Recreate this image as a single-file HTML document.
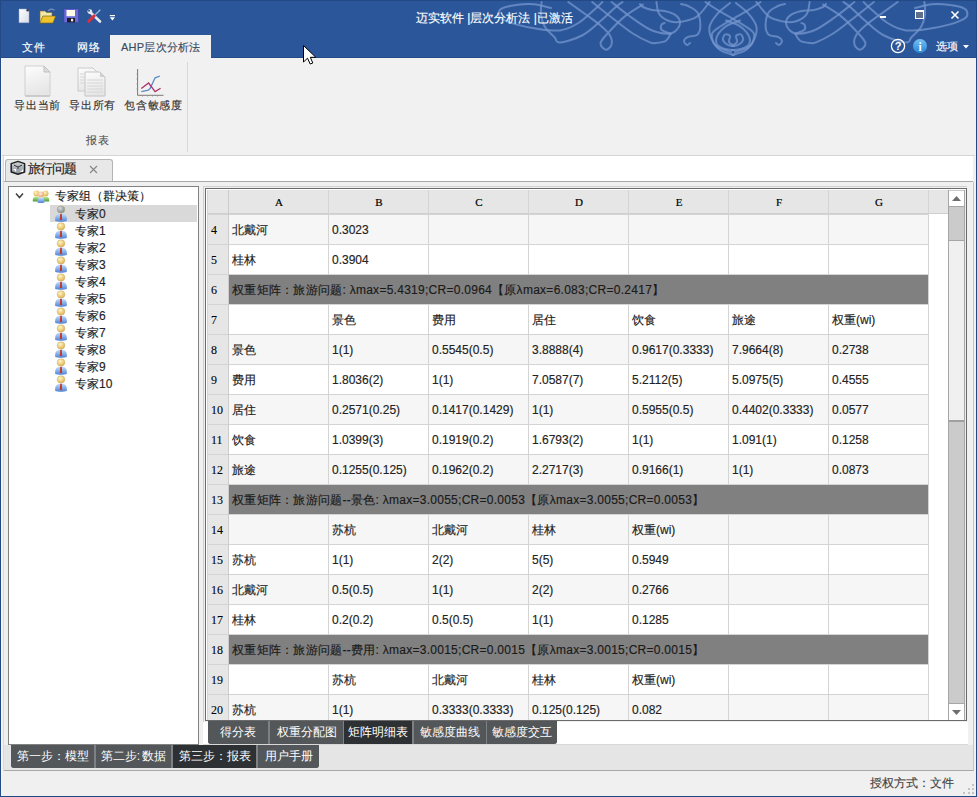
<!DOCTYPE html>
<html><head><meta charset="utf-8">
<style>
*{box-sizing:border-box}
html,body{margin:0;padding:0;width:977px;height:797px;overflow:hidden;background:#f0f0f0;font-family:"Liberation Sans",sans-serif;font-size:12px;color:#262626}
.a{-webkit-text-stroke:0.15px currentColor}
.a{position:absolute}
#title{left:0;top:0;width:977px;height:58px;background:#2b579a}
#ribbon{left:0;top:58px;width:977px;height:98px;background:#f1f1f1;border-bottom:1px solid #d5d5d5}
.tab{color:#fff;font-size:11px;top:41px;line-height:13px;letter-spacing:0.5px}
.rbtn{font-size:11px;color:#333;line-height:13px;white-space:nowrap;letter-spacing:0.8px}
#doctabs{left:3px;top:156px;width:970px;height:26px;background:#fff;border-bottom:1px solid #a8a8a8}
#body{left:3px;top:182px;width:971px;height:589px;background:#f0f0f0;border-bottom:1px solid #a8a8a8;border-right:1px solid #c4c4c4}
#tree{left:8px;top:186px;width:191px;height:559px;background:#fff;border:1px solid #828282}
.ti{left:0;height:17px;line-height:17px;white-space:nowrap;font-size:12px;color:#1e1e1e}
#grid{left:203px;top:186px;width:764px;height:536px;border:1px solid #d9d9d9;background:#fff}
#gframe{left:205px;top:188px;width:762px;height:533px;border:1px solid #6e6e6e;border-right-width:1px}
.hd{background:#e6e6e6}
.cell{position:absolute;height:30px;line-height:30px;padding-left:3px;white-space:nowrap;overflow:visible}
.stab{position:absolute;height:23px;line-height:23px;text-align:center;color:#fff;background:#53575a;font-size:12px;white-space:nowrap}
.stab.act{background:#2e3134}
.ct{font-size:12px;line-height:14px;white-space:nowrap;color:#222}
.hl{font-family:"Liberation Serif",serif;font-size:11px;font-weight:normal;text-align:center;line-height:12px;color:#000;-webkit-text-stroke:0.2px #000}
.rn{font-family:"Liberation Serif",serif;font-size:12px;font-weight:normal;line-height:14px;color:#000;-webkit-text-stroke:0.1px #000}
.mg{letter-spacing:0.27px;color:#1a1a1a}
</style></head><body>
<!-- window frame -->
<div class="a" id="title">
 <svg class="a" style="left:0;top:0" width="977" height="58" viewBox="0 0 977 58">
  <g fill="none" stroke="#7596cd" stroke-opacity="0.75" stroke-width="2" stroke-linecap="round">
   <path d="M551.0 8.0 C548.2 7.4 539.8 4.8 534.0 4.3 C528.2 3.8 521.4 4.3 516.0 5.0 C510.6 5.7 504.4 7.0 501.5 8.6 C498.6 10.2 498.6 12.6 498.6 14.3 C498.6 16.0 498.6 16.9 501.5 18.6 C504.4 20.3 510.1 22.7 516.0 24.4 C521.9 26.1 529.7 27.7 537.0 28.7 C544.3 29.7 553.1 31.3 560.0 30.4 C566.9 29.4 572.3 26.8 578.4 23.0 C584.5 19.2 592.8 10.9 596.8 7.4 C600.8 3.9 601.5 2.9 602.4 2.0"/>
   <path d="M541.6 2.0 C541.5 4.2 540.4 10.8 541.0 15.0 C541.6 19.2 542.8 23.3 545.0 27.0 C547.2 30.7 552.0 34.6 554.5 37.2 C557.0 39.8 555.2 42.8 560.0 42.4 C564.8 42.0 576.1 38.7 583.0 35.0 C589.9 31.3 596.0 24.9 601.4 20.3 C606.8 15.7 611.7 10.5 615.2 7.4 C618.7 4.3 621.4 2.9 622.6 2.0"/>
   <path d="M642.9 4.6 C639.8 6.6 630.3 11.9 624.5 16.6 C618.7 21.4 611.9 28.7 607.9 33.1 C603.9 37.5 600.8 40.5 600.5 43.3 C600.2 46.1 604.1 49.6 606.0 49.7 C607.9 49.9 611.0 46.7 611.6 44.2 C612.2 41.8 611.6 38.2 609.7 35.0 C607.8 31.8 603.7 28.2 600.0 25.0 C596.3 21.8 592.9 19.5 587.6 15.7 C582.3 11.9 571.5 4.3 568.3 2.0"/>
   <path d="M592.2 2.0 C596.0 5.1 608.3 15.0 615.2 20.3 C622.1 25.6 627.9 30.3 633.7 34.0 C639.5 37.7 646.4 40.9 650.0 42.4 C653.6 43.9 652.8 43.2 655.4 43.0 C658.0 42.8 663.0 42.5 665.6 41.0 C668.2 39.5 669.9 35.0 670.7 33.8"/>
   <path d="M611.6 2.0 C614.5 4.3 622.6 11.1 629.0 15.7 C635.4 20.3 643.6 26.5 650.0 29.5 C656.4 32.5 663.3 33.6 667.6 33.8 C671.9 34.0 673.7 32.6 675.8 30.7 C677.9 28.8 680.0 25.1 680.0 22.5 C680.0 19.9 678.2 17.3 675.8 15.4 C673.4 13.5 669.6 12.2 665.6 11.3 C661.6 10.4 655.8 10.7 652.0 10.0 C648.2 9.3 645.0 8.0 643.0 7.0 C641.0 6.0 640.5 4.5 640.0 4.0"/>
   <path d="M670.7 33.8 C669.2 33.1 663.0 31.2 661.5 29.7 C660.0 28.2 661.0 25.7 661.5 24.6 C662.0 23.5 664.1 23.3 664.6 23.0"/>
   <path d="M656.4 2.0 C656.9 4.1 657.0 11.1 659.4 14.3 C661.8 17.6 666.8 20.3 670.7 21.5 C674.6 22.7 678.6 22.4 683.0 21.5 C687.4 20.6 692.9 19.6 697.3 16.4 C701.7 13.1 707.5 4.4 709.6 2.0"/>
   <path d="M681.0 4.0 C682.2 4.3 685.3 4.6 688.0 6.0 C690.7 7.4 695.2 9.0 697.3 12.3 C699.4 15.6 700.4 21.9 700.4 25.6 C700.4 29.4 699.4 32.9 697.3 34.8 C695.2 36.7 690.2 35.8 688.0 36.8 C685.8 37.8 684.2 39.6 684.0 41.0 C683.8 42.4 686.0 44.7 687.0 45.0 C688.0 45.3 689.5 43.3 690.0 43.0"/>
   <path d="M705.5 2.0 C707.5 3.4 713.4 7.5 717.8 10.2 C722.2 12.9 727.5 15.8 732.0 18.4 C736.5 21.0 741.3 23.4 745.0 26.0 C748.7 28.6 753.2 30.7 754.0 34.0 C754.8 37.3 753.2 43.0 750.0 46.0 C746.8 49.0 737.5 51.0 735.0 52.0"/>
   <path d="M730.0 3.0 C728.0 4.7 721.2 9.4 717.8 13.3 C714.4 17.2 710.6 22.3 709.6 26.6 C708.6 30.9 709.9 35.0 711.6 38.9 C713.3 42.8 716.3 47.3 720.0 50.0 C723.7 52.7 731.7 54.2 734.0 55.0"/>
   <path d="M740.0 20.5 C737.8 21.4 730.7 23.2 727.0 25.6 C723.3 28.0 719.5 31.7 717.8 34.8 C716.1 37.9 715.6 41.6 716.8 44.0 C718.0 46.4 722.1 48.0 725.0 49.0 C727.9 50.0 732.5 49.8 734.0 50.0"/>
   <path d="M734.0 46.0 C733.0 45.8 729.8 46.0 728.0 45.0 C726.2 44.0 723.5 41.8 723.0 40.0 C722.5 38.2 723.8 35.2 725.0 34.5 C726.2 33.8 729.3 34.8 730.0 36.0 C730.7 37.2 728.3 40.3 729.0 42.0 C729.7 43.7 733.2 45.3 734.0 46.0"/>
   <path d="M915.0 8.0 C917.8 7.4 926.2 4.8 932.0 4.3 C937.8 3.8 944.6 4.3 950.0 5.0 C955.4 5.7 961.6 7.0 964.5 8.6 C967.4 10.2 967.4 12.6 967.4 14.3 C967.4 16.0 967.4 16.9 964.5 18.6 C961.6 20.3 955.9 22.7 950.0 24.4 C944.1 26.1 936.3 27.7 929.0 28.7 C921.7 29.7 912.9 31.3 906.0 30.4 C899.1 29.4 893.7 26.8 887.6 23.0 C881.5 19.2 873.2 10.9 869.2 7.4 C865.2 3.9 864.5 2.9 863.6 2.0"/>
   <path d="M924.4 2.0 C924.5 4.2 925.6 10.8 925.0 15.0 C924.4 19.2 923.2 23.3 921.0 27.0 C918.8 30.7 914.0 34.6 911.5 37.2 C909.0 39.8 910.8 42.8 906.0 42.4 C901.2 42.0 889.9 38.7 883.0 35.0 C876.1 31.3 870.0 24.9 864.6 20.3 C859.2 15.7 854.3 10.5 850.8 7.4 C847.3 4.3 844.6 2.9 843.4 2.0"/>
   <path d="M823.1 4.6 C826.2 6.6 835.7 11.9 841.5 16.6 C847.3 21.4 854.1 28.7 858.1 33.1 C862.1 37.5 865.2 40.5 865.5 43.3 C865.8 46.1 861.9 49.6 860.0 49.7 C858.1 49.9 855.0 46.7 854.4 44.2 C853.8 41.8 854.4 38.2 856.3 35.0 C858.2 31.8 862.3 28.2 866.0 25.0 C869.7 21.8 873.1 19.5 878.4 15.7 C883.7 11.9 894.5 4.3 897.7 2.0"/>
   <path d="M873.8 2.0 C870.0 5.1 857.7 15.0 850.8 20.3 C843.9 25.6 838.1 30.3 832.3 34.0 C826.5 37.7 819.6 40.9 816.0 42.4 C812.4 43.9 813.2 43.2 810.6 43.0 C808.0 42.8 803.0 42.5 800.4 41.0 C797.8 39.5 796.1 35.0 795.3 33.8"/>
   <path d="M854.4 2.0 C851.5 4.3 843.4 11.1 837.0 15.7 C830.6 20.3 822.4 26.5 816.0 29.5 C809.6 32.5 802.7 33.6 798.4 33.8 C794.1 34.0 792.3 32.6 790.2 30.7 C788.1 28.8 786.0 25.1 786.0 22.5 C786.0 19.9 787.8 17.3 790.2 15.4 C792.6 13.5 796.4 12.2 800.4 11.3 C804.4 10.4 810.2 10.7 814.0 10.0 C817.8 9.3 821.0 8.0 823.0 7.0 C825.0 6.0 825.5 4.5 826.0 4.0"/>
   <path d="M795.3 33.8 C796.8 33.1 803.0 31.2 804.5 29.7 C806.0 28.2 805.0 25.7 804.5 24.6 C804.0 23.5 801.9 23.3 801.4 23.0"/>
   <path d="M809.6 2.0 C809.1 4.1 809.0 11.1 806.6 14.3 C804.2 17.6 799.2 20.3 795.3 21.5 C791.4 22.7 787.4 22.4 783.0 21.5 C778.6 20.6 773.1 19.6 768.7 16.4 C764.3 13.1 758.5 4.4 756.4 2.0"/>
   <path d="M785.0 4.0 C783.8 4.3 780.7 4.6 778.0 6.0 C775.3 7.4 770.8 9.0 768.7 12.3 C766.6 15.6 765.6 21.9 765.6 25.6 C765.6 29.4 766.6 32.9 768.7 34.8 C770.8 36.7 775.8 35.8 778.0 36.8 C780.2 37.8 781.8 39.6 782.0 41.0 C782.2 42.4 780.0 44.7 779.0 45.0 C778.0 45.3 776.5 43.3 776.0 43.0"/>
   <path d="M760.5 2.0 C758.5 3.4 752.6 7.5 748.2 10.2 C743.8 12.9 738.5 15.8 734.0 18.4 C729.5 21.0 724.7 23.4 721.0 26.0 C717.3 28.6 712.8 30.7 712.0 34.0 C711.2 37.3 712.8 43.0 716.0 46.0 C719.2 49.0 728.5 51.0 731.0 52.0"/>
   <path d="M736.0 3.0 C738.0 4.7 744.8 9.4 748.2 13.3 C751.6 17.2 755.4 22.3 756.4 26.6 C757.4 30.9 756.1 35.0 754.4 38.9 C752.7 42.8 749.7 47.3 746.0 50.0 C742.3 52.7 734.3 54.2 732.0 55.0"/>
   <path d="M726.0 20.5 C728.2 21.4 735.3 23.2 739.0 25.6 C742.7 28.0 746.5 31.7 748.2 34.8 C749.9 37.9 750.4 41.6 749.2 44.0 C748.0 46.4 743.9 48.0 741.0 49.0 C738.1 50.0 733.5 49.8 732.0 50.0"/>
   <path d="M732.0 46.0 C733.0 45.8 736.2 46.0 738.0 45.0 C739.8 44.0 742.5 41.8 743.0 40.0 C743.5 38.2 742.2 35.2 741.0 34.5 C739.8 33.8 736.7 34.8 736.0 36.0 C735.3 37.2 737.7 40.3 737.0 42.0 C736.3 43.7 732.8 45.3 732.0 46.0"/>
  </g>
 </svg>
</div>

<div class="a" style="left:416px;top:11px;color:#fff;font-size:12px;line-height:14px;white-space:nowrap">迈实软件 |层次分析法 |已激活</div>

<!-- window controls -->
<div class="a" style="left:880px;top:16px;width:6px;height:2px;background:#fff"></div>
<div class="a" style="left:915px;top:10px;width:9px;height:9px;border:1px solid #fff;border-top-width:2px;background:#5f7089"></div>
<svg class="a" style="left:950px;top:10px" width="10" height="10"><path d="M1.5 1.5 L8.5 8.5 M8.5 1.5 L1.5 8.5" stroke="#fff" stroke-width="1.6"/></svg>

<!-- quick access -->
<svg class="a" style="left:14px;top:6px" width="110" height="22">
 <defs><linearGradient id="pg" x1="0" y1="0" x2="1" y2="1"><stop offset="0" stop-color="#ffffff"/><stop offset="1" stop-color="#d8dce8"/></linearGradient></defs>
 <path d="M5 3 H12.5 L15 5.5 V16.7 H5 Z" fill="url(#pg)" stroke="#9aa4c0" stroke-width="0.5"/>
 <circle cx="13.6" cy="4.3" r="1.3" fill="#404860"/>
 <path d="M26 5 H31 L32.5 6.5 H38 V17 H26 Z" fill="#f3e8a8" stroke="#7a6a28" stroke-width="0.6"/>
 <path d="M28.8 10 H41.7 L39 17 H26 Z" fill="#f0c42c" stroke="#6a5a20" stroke-width="0.6"/>
 <path d="M34 5 C36 2.5 39 2.5 40.5 4.5" fill="none" stroke="#7d8fc0" stroke-width="1.2"/>
 <rect x="50" y="3" width="14.4" height="13.4" fill="#6c6cd8" stroke="#3c3ca8" stroke-width="0.5"/>
 <rect x="52.5" y="4" width="8.5" height="6.2" fill="#fffbe8"/>
 <rect x="53" y="12" width="8" height="4.4" fill="#1c1c2c"/><rect x="57" y="12.8" width="2.2" height="2.6" fill="#f0f0f0"/>
 <path d="M80.5 9.5 L86.3 3.8" stroke="#9ab8d8" stroke-width="1.3"/>
 <path d="M75.5 5.5 L86 15.5" stroke="#e6e8ee" stroke-width="2.6" stroke-linecap="round"/>
 <circle cx="75.8" cy="5.6" r="2.4" fill="#e6e8ee"/><circle cx="75" cy="4.8" r="1" fill="#2b579a"/>
 <path d="M74.8 15.3 L80.2 9.9" stroke="#d83040" stroke-width="3" stroke-linecap="round"/>
 <rect x="95.8" y="9" width="5.2" height="1.2" fill="#fff"/>
 <path d="M95.8 11.2 H101 L98.4 14.6 Z" fill="#fff"/>
</svg>

<!-- ribbon tabs -->
<div class="a tab" style="left:22px">文件</div>
<div class="a tab" style="left:77px">网络</div>
<div class="a" style="left:0;top:57px;width:977px;height:1px;background:#244b86"></div>
<div class="a" style="left:110px;top:35px;width:101px;height:24px;background:#f1f1f1"></div>
<div class="a tab" style="left:121px;color:#3a4a5f;letter-spacing:0.25px">AHP层次分析法</div>

<svg class="a" style="left:889px;top:37px" width="20" height="18"><circle cx="9" cy="9" r="6.6" fill="none" stroke="#fff" stroke-width="1.3"/><text x="9" y="13" text-anchor="middle" font-size="11" font-weight="bold" fill="#fff" font-family="Liberation Sans">?</text></svg>
<svg class="a" style="left:911px;top:37px" width="18" height="18"><defs><linearGradient id="ig" x1="0" y1="0" x2="0" y2="1"><stop offset="0" stop-color="#74c0f6"/><stop offset="1" stop-color="#2a86d6"/></linearGradient></defs><circle cx="9" cy="9" r="7" fill="url(#ig)"/><text x="9" y="13.5" text-anchor="middle" font-size="11.5" font-weight="bold" fill="#fff" font-family="Liberation Serif">i</text></svg>
<div class="a" style="left:936px;top:40px;color:#fff;font-size:11px;line-height:13px">选项</div>
<svg class="a" style="left:963px;top:45px" width="8" height="5"><path d="M0 0 H6 L3 3.5 Z" fill="#fff"/></svg>

<div class="a" id="ribbon"></div>
<!-- ribbon buttons -->
<svg class="a" style="left:22px;top:65px" width="32" height="32">
 <defs><linearGradient id="dg" x1="0" y1="0" x2="0.3" y2="1"><stop offset="0" stop-color="#fdfdfd"/><stop offset="1" stop-color="#e6e6e6"/></linearGradient></defs><path d="M3 1 H22 L28 7 V31 H3 Z" fill="url(#dg)" stroke="#d0d0d0"/><path d="M3.5 31 H27.5" stroke="#b8b8b8"/>
 <path d="M22 1 V7 H28 Z" fill="#dcdcdc" stroke="#c0c0c0"/>
</svg>
<div class="a rbtn" style="left:14px;top:99px">导出当前</div>
<svg class="a" style="left:76px;top:65px" width="32" height="32">
 <path d="M2 3 H17 L21 7 V26 H2 Z" fill="url(#dg)" stroke="#cacaca"/>
 <path d="M9 7 H24 L29 12 V31 H9 Z" fill="url(#dg)" stroke="#c4c4c4"/><path d="M24 7 V12 H29 Z" fill="#d0d0d0"/>
 <g stroke="#d6d6d6"><path d="M4 9 H8 M4 12 H8 M4 15 H8 M4 18 H8 M11 15 H27 M11 18 H27 M11 21 H27 M11 24 H27 M11 27 H27"/></g>
</svg>
<div class="a rbtn" style="left:69px;top:99px">导出所有</div>
<svg class="a" style="left:134px;top:66px" width="32" height="32">
 <path d="M3.6 3 V29.3 H29.5" fill="none" stroke="#7a7a7a" stroke-width="1"/>
 <path d="M2.5 8 H3.6 M2.5 13 H3.6 M2.5 18 H3.6 M2.5 23 H3.6 M8.5 29.3 V30.5 M13.5 29.3 V30.5 M18.5 29.3 V30.5 M23.5 29.3 V30.5" stroke="#8a8a8a" stroke-width="0.8"/>
 <path d="M7.3 25.6 L14.3 24.1 L16.2 22.3 L21.1 11.8 L26 10" fill="none" stroke="#5a8cc4" stroke-width="1.3"/>
 <path d="M7.3 22.6 L14.6 17 L21.1 25.6 L26.6 22.3" fill="none" stroke="#b03070" stroke-width="1.3"/>
</svg>
<div class="a rbtn" style="left:124px;top:99px">包含敏感度</div>
<div class="a rbtn" style="left:86px;top:134px;color:#555">报表</div>
<div class="a" style="left:187px;top:62px;width:1px;height:90px;background:#d8d8d8"></div>

<!-- doc tab strip -->
<div class="a" id="doctabs"></div>
<div class="a" style="left:5px;top:159px;width:108px;height:22px;background:#e8e8e8;border:1px solid #b4b4b4;border-bottom:none;border-radius:3px 3px 0 0"></div>
<svg class="a" style="left:10px;top:160px" width="17" height="16"><defs><linearGradient id="cg" x1="0" y1="0" x2="0" y2="1"><stop offset="0" stop-color="#d0d4d8"/><stop offset="1" stop-color="#8a9298"/></linearGradient></defs><path d="M1.2 3.6 L8 1.4 L14.6 3.6 V12 L8 14.3 L1.2 12 Z" fill="url(#cg)" stroke="#1e2226" stroke-width="1.5" stroke-linejoin="round"/><path d="M4 5.2 L8 7 L12 5.2 M8 7 V9.2" stroke="#30363a" stroke-width="1" fill="none"/><path d="M3.5 9.5 H5.5 V11.5 M10.5 11.5 H12.5 V9.5" stroke="#fff" stroke-width="1.2" fill="none"/></svg>
<div class="a" style="left:28px;top:161px;font-size:13px;line-height:15px;letter-spacing:-0.9px;color:#1a1a1a">旅行问题</div>
<svg class="a" style="left:89px;top:165px" width="10" height="10"><path d="M1 1 L8 8 M8 1 L1 8" stroke="#888" stroke-width="1.2"/></svg>

<div class="a" id="body"></div>
<div class="a" style="left:4px;top:745px;width:969px;height:25px;background:#e5e5e5"></div>

<div class="a" id="tree"></div>

<svg class="a" style="left:15px;top:192px" width="10" height="8"><path d="M1 1.5 L4.5 5.5 L8 1.5" fill="none" stroke="#404040" stroke-width="1.5"/></svg>
<svg class="a" style="left:32px;top:189px" width="18" height="15">
<defs><radialGradient id="hd" cx="40%" cy="35%" r="65%"><stop offset="0" stop-color="#fff6c8"/><stop offset="1" stop-color="#e2b24c"/></radialGradient>
<radialGradient id="hg0" cx="40%" cy="35%" r="65%"><stop offset="0" stop-color="#d8dde0"/><stop offset="1" stop-color="#7d878c"/></radialGradient>
<radialGradient id="hd2" cx="40%" cy="35%" r="65%"><stop offset="0" stop-color="#fff0e0"/><stop offset="1" stop-color="#e8a070"/></radialGradient>
<linearGradient id="bd" x1="0" y1="0" x2="0" y2="1"><stop offset="0" stop-color="#c4e0fc"/><stop offset="1" stop-color="#4f82d8"/></linearGradient>
<linearGradient id="gb" x1="0" y1="0" x2="0" y2="1"><stop offset="0" stop-color="#c8f0a0"/><stop offset="1" stop-color="#4a9a30"/></linearGradient></defs>
<circle cx="4.5" cy="4.5" r="3" fill="url(#hd)"/><circle cx="13.5" cy="4.5" r="3" fill="url(#hd)"/>
<path d="M0.8 12.5 C0.5 8.5 2 7.5 4.5 7.5 C7 7.5 8.5 8.5 8.2 12.5 Z" fill="url(#gb)"/><path d="M9.8 12.5 C9.5 8.5 11 7.5 13.5 7.5 C16 7.5 17.5 8.5 17.2 12.5 Z" fill="url(#gb)"/>
<circle cx="9" cy="5.5" r="3" fill="url(#hd2)"/><path d="M5.5 13.5 C5.2 9.5 6.5 8.5 9 8.5 C11.5 8.5 12.8 9.5 12.5 13.5 C11 14.3 7 14.3 5.5 13.5 Z" fill="url(#bd)"/>
</svg>
<div class="a ti" style="left:55px;top:188px">专家组（群决策）</div>
<div class="a" style="left:50px;top:205px;width:147px;height:17px;background:#d9d9d9"></div>
<svg class="a" style="left:54px;top:205px" width="14" height="17">
<ellipse cx="7" cy="4.4" rx="3.9" ry="3.7" fill="url(#hg0)" stroke="#c8b47e" stroke-width="0.5"/>
<path d="M1.2 16 C0.6 10.5 3 8.6 7 8.6 C11 8.6 13.4 10.5 12.8 16 C10 17 4 17 1.2 16 Z" fill="url(#bd)"/>
<path d="M6.2 8.8 H7.8 L8.1 14.2 L7 15.4 L5.9 14.2 Z" fill="#c23a2a"/>
</svg>
<div class="a ti" style="left:75px;top:206px">专家0</div>
<svg class="a" style="left:54px;top:222px" width="14" height="17">
<ellipse cx="7" cy="4.4" rx="3.9" ry="3.7" fill="url(#hd)" stroke="#c8b47e" stroke-width="0.5"/>
<path d="M1.2 16 C0.6 10.5 3 8.6 7 8.6 C11 8.6 13.4 10.5 12.8 16 C10 17 4 17 1.2 16 Z" fill="url(#bd)"/>
<path d="M6.2 8.8 H7.8 L8.1 14.2 L7 15.4 L5.9 14.2 Z" fill="#c23a2a"/>
</svg>
<div class="a ti" style="left:75px;top:223px">专家1</div>
<svg class="a" style="left:54px;top:239px" width="14" height="17">
<ellipse cx="7" cy="4.4" rx="3.9" ry="3.7" fill="url(#hd)" stroke="#c8b47e" stroke-width="0.5"/>
<path d="M1.2 16 C0.6 10.5 3 8.6 7 8.6 C11 8.6 13.4 10.5 12.8 16 C10 17 4 17 1.2 16 Z" fill="url(#bd)"/>
<path d="M6.2 8.8 H7.8 L8.1 14.2 L7 15.4 L5.9 14.2 Z" fill="#c23a2a"/>
</svg>
<div class="a ti" style="left:75px;top:240px">专家2</div>
<svg class="a" style="left:54px;top:256px" width="14" height="17">
<ellipse cx="7" cy="4.4" rx="3.9" ry="3.7" fill="url(#hd)" stroke="#c8b47e" stroke-width="0.5"/>
<path d="M1.2 16 C0.6 10.5 3 8.6 7 8.6 C11 8.6 13.4 10.5 12.8 16 C10 17 4 17 1.2 16 Z" fill="url(#bd)"/>
<path d="M6.2 8.8 H7.8 L8.1 14.2 L7 15.4 L5.9 14.2 Z" fill="#c23a2a"/>
</svg>
<div class="a ti" style="left:75px;top:257px">专家3</div>
<svg class="a" style="left:54px;top:273px" width="14" height="17">
<ellipse cx="7" cy="4.4" rx="3.9" ry="3.7" fill="url(#hd)" stroke="#c8b47e" stroke-width="0.5"/>
<path d="M1.2 16 C0.6 10.5 3 8.6 7 8.6 C11 8.6 13.4 10.5 12.8 16 C10 17 4 17 1.2 16 Z" fill="url(#bd)"/>
<path d="M6.2 8.8 H7.8 L8.1 14.2 L7 15.4 L5.9 14.2 Z" fill="#c23a2a"/>
</svg>
<div class="a ti" style="left:75px;top:274px">专家4</div>
<svg class="a" style="left:54px;top:290px" width="14" height="17">
<ellipse cx="7" cy="4.4" rx="3.9" ry="3.7" fill="url(#hd)" stroke="#c8b47e" stroke-width="0.5"/>
<path d="M1.2 16 C0.6 10.5 3 8.6 7 8.6 C11 8.6 13.4 10.5 12.8 16 C10 17 4 17 1.2 16 Z" fill="url(#bd)"/>
<path d="M6.2 8.8 H7.8 L8.1 14.2 L7 15.4 L5.9 14.2 Z" fill="#c23a2a"/>
</svg>
<div class="a ti" style="left:75px;top:291px">专家5</div>
<svg class="a" style="left:54px;top:307px" width="14" height="17">
<ellipse cx="7" cy="4.4" rx="3.9" ry="3.7" fill="url(#hd)" stroke="#c8b47e" stroke-width="0.5"/>
<path d="M1.2 16 C0.6 10.5 3 8.6 7 8.6 C11 8.6 13.4 10.5 12.8 16 C10 17 4 17 1.2 16 Z" fill="url(#bd)"/>
<path d="M6.2 8.8 H7.8 L8.1 14.2 L7 15.4 L5.9 14.2 Z" fill="#c23a2a"/>
</svg>
<div class="a ti" style="left:75px;top:308px">专家6</div>
<svg class="a" style="left:54px;top:324px" width="14" height="17">
<ellipse cx="7" cy="4.4" rx="3.9" ry="3.7" fill="url(#hd)" stroke="#c8b47e" stroke-width="0.5"/>
<path d="M1.2 16 C0.6 10.5 3 8.6 7 8.6 C11 8.6 13.4 10.5 12.8 16 C10 17 4 17 1.2 16 Z" fill="url(#bd)"/>
<path d="M6.2 8.8 H7.8 L8.1 14.2 L7 15.4 L5.9 14.2 Z" fill="#c23a2a"/>
</svg>
<div class="a ti" style="left:75px;top:325px">专家7</div>
<svg class="a" style="left:54px;top:341px" width="14" height="17">
<ellipse cx="7" cy="4.4" rx="3.9" ry="3.7" fill="url(#hd)" stroke="#c8b47e" stroke-width="0.5"/>
<path d="M1.2 16 C0.6 10.5 3 8.6 7 8.6 C11 8.6 13.4 10.5 12.8 16 C10 17 4 17 1.2 16 Z" fill="url(#bd)"/>
<path d="M6.2 8.8 H7.8 L8.1 14.2 L7 15.4 L5.9 14.2 Z" fill="#c23a2a"/>
</svg>
<div class="a ti" style="left:75px;top:342px">专家8</div>
<svg class="a" style="left:54px;top:358px" width="14" height="17">
<ellipse cx="7" cy="4.4" rx="3.9" ry="3.7" fill="url(#hd)" stroke="#c8b47e" stroke-width="0.5"/>
<path d="M1.2 16 C0.6 10.5 3 8.6 7 8.6 C11 8.6 13.4 10.5 12.8 16 C10 17 4 17 1.2 16 Z" fill="url(#bd)"/>
<path d="M6.2 8.8 H7.8 L8.1 14.2 L7 15.4 L5.9 14.2 Z" fill="#c23a2a"/>
</svg>
<div class="a ti" style="left:75px;top:359px">专家9</div>
<svg class="a" style="left:54px;top:375px" width="14" height="17">
<ellipse cx="7" cy="4.4" rx="3.9" ry="3.7" fill="url(#hd)" stroke="#c8b47e" stroke-width="0.5"/>
<path d="M1.2 16 C0.6 10.5 3 8.6 7 8.6 C11 8.6 13.4 10.5 12.8 16 C10 17 4 17 1.2 16 Z" fill="url(#bd)"/>
<path d="M6.2 8.8 H7.8 L8.1 14.2 L7 15.4 L5.9 14.2 Z" fill="#c23a2a"/>
</svg>
<div class="a ti" style="left:75px;top:376px">专家10</div>
<div class="a" style="left:207px;top:190px;width:741px;height:24px;background:#e6e6e6"></div>
<div class="a" style="left:207px;top:214px;width:21px;height:506px;background:#e6e6e6"></div>
<div class="a" style="left:229px;top:214px;width:700px;height:30px;background:#f6f6f6"></div>
<div class="a" style="left:229px;top:244px;width:700px;height:30px;background:#ffffff"></div>
<div class="a" style="left:229px;top:274px;width:700px;height:30px;background:#f6f6f6"></div>
<div class="a" style="left:229px;top:304px;width:700px;height:30px;background:#ffffff"></div>
<div class="a" style="left:229px;top:334px;width:700px;height:30px;background:#f6f6f6"></div>
<div class="a" style="left:229px;top:364px;width:700px;height:30px;background:#ffffff"></div>
<div class="a" style="left:229px;top:394px;width:700px;height:30px;background:#f6f6f6"></div>
<div class="a" style="left:229px;top:424px;width:700px;height:30px;background:#ffffff"></div>
<div class="a" style="left:229px;top:454px;width:700px;height:30px;background:#f6f6f6"></div>
<div class="a" style="left:229px;top:484px;width:700px;height:30px;background:#ffffff"></div>
<div class="a" style="left:229px;top:514px;width:700px;height:30px;background:#f6f6f6"></div>
<div class="a" style="left:229px;top:544px;width:700px;height:30px;background:#ffffff"></div>
<div class="a" style="left:229px;top:574px;width:700px;height:30px;background:#f6f6f6"></div>
<div class="a" style="left:229px;top:604px;width:700px;height:30px;background:#ffffff"></div>
<div class="a" style="left:229px;top:634px;width:700px;height:30px;background:#f6f6f6"></div>
<div class="a" style="left:229px;top:664px;width:700px;height:30px;background:#ffffff"></div>
<div class="a" style="left:229px;top:694px;width:700px;height:26px;background:#f6f6f6"></div>
<div class="a" style="left:207px;top:214px;width:722px;height:1px;background:#d4d4d4"></div>
<div class="a" style="left:207px;top:244px;width:722px;height:1px;background:#d4d4d4"></div>
<div class="a" style="left:207px;top:274px;width:722px;height:1px;background:#d4d4d4"></div>
<div class="a" style="left:207px;top:304px;width:722px;height:1px;background:#d4d4d4"></div>
<div class="a" style="left:207px;top:334px;width:722px;height:1px;background:#d4d4d4"></div>
<div class="a" style="left:207px;top:364px;width:722px;height:1px;background:#d4d4d4"></div>
<div class="a" style="left:207px;top:394px;width:722px;height:1px;background:#d4d4d4"></div>
<div class="a" style="left:207px;top:424px;width:722px;height:1px;background:#d4d4d4"></div>
<div class="a" style="left:207px;top:454px;width:722px;height:1px;background:#d4d4d4"></div>
<div class="a" style="left:207px;top:484px;width:722px;height:1px;background:#d4d4d4"></div>
<div class="a" style="left:207px;top:514px;width:722px;height:1px;background:#d4d4d4"></div>
<div class="a" style="left:207px;top:544px;width:722px;height:1px;background:#d4d4d4"></div>
<div class="a" style="left:207px;top:574px;width:722px;height:1px;background:#d4d4d4"></div>
<div class="a" style="left:207px;top:604px;width:722px;height:1px;background:#d4d4d4"></div>
<div class="a" style="left:207px;top:634px;width:722px;height:1px;background:#d4d4d4"></div>
<div class="a" style="left:207px;top:664px;width:722px;height:1px;background:#d4d4d4"></div>
<div class="a" style="left:207px;top:694px;width:722px;height:1px;background:#d4d4d4"></div>
<div class="a" style="left:207px;top:213px;width:741px;height:1px;background:#cfcfcf"></div>
<div class="a" style="left:228px;top:190px;width:1px;height:530px;background:#cccccc"></div>
<div class="a" style="left:328px;top:190px;width:1px;height:530px;background:#d4d4d4"></div>
<div class="a" style="left:428px;top:190px;width:1px;height:530px;background:#d4d4d4"></div>
<div class="a" style="left:528px;top:190px;width:1px;height:530px;background:#d4d4d4"></div>
<div class="a" style="left:628px;top:190px;width:1px;height:530px;background:#d4d4d4"></div>
<div class="a" style="left:728px;top:190px;width:1px;height:530px;background:#d4d4d4"></div>
<div class="a" style="left:828px;top:190px;width:1px;height:530px;background:#d4d4d4"></div>
<div class="a" style="left:928px;top:190px;width:1px;height:530px;background:#d4d4d4"></div>
<div class="a" style="left:229px;top:275px;width:699px;height:29px;background:#808080"></div>
<div class="a" style="left:229px;top:485px;width:699px;height:29px;background:#808080"></div>
<div class="a" style="left:229px;top:635px;width:699px;height:29px;background:#808080"></div>
<div class="a hl" style="left:269px;top:196px;width:20px">A</div>
<div class="a hl" style="left:369px;top:196px;width:20px">B</div>
<div class="a hl" style="left:469px;top:196px;width:20px">C</div>
<div class="a hl" style="left:569px;top:196px;width:20px">D</div>
<div class="a hl" style="left:669px;top:196px;width:20px">E</div>
<div class="a hl" style="left:769px;top:196px;width:20px">F</div>
<div class="a hl" style="left:869px;top:196px;width:20px">G</div>
<div class="a rn" style="left:211px;top:223px">4</div>
<div class="a rn" style="left:211px;top:253px">5</div>
<div class="a rn" style="left:211px;top:283px">6</div>
<div class="a rn" style="left:211px;top:313px">7</div>
<div class="a rn" style="left:211px;top:343px">8</div>
<div class="a rn" style="left:211px;top:373px">9</div>
<div class="a rn" style="left:211px;top:403px">10</div>
<div class="a rn" style="left:211px;top:433px">11</div>
<div class="a rn" style="left:211px;top:463px">12</div>
<div class="a rn" style="left:211px;top:493px">13</div>
<div class="a rn" style="left:211px;top:523px">14</div>
<div class="a rn" style="left:211px;top:553px">15</div>
<div class="a rn" style="left:211px;top:583px">16</div>
<div class="a rn" style="left:211px;top:613px">17</div>
<div class="a rn" style="left:211px;top:643px">18</div>
<div class="a rn" style="left:211px;top:673px">19</div>
<div class="a rn" style="left:211px;top:703px">20</div>
<div class="a ct" style="left:232px;top:223px">北戴河</div>
<div class="a ct" style="left:332px;top:223px">0.3023</div>
<div class="a ct" style="left:232px;top:253px">桂林</div>
<div class="a ct" style="left:332px;top:253px">0.3904</div>
<div class="a ct" style="left:332px;top:313px">景色</div>
<div class="a ct" style="left:432px;top:313px">费用</div>
<div class="a ct" style="left:532px;top:313px">居住</div>
<div class="a ct" style="left:632px;top:313px">饮食</div>
<div class="a ct" style="left:732px;top:313px">旅途</div>
<div class="a ct" style="left:832px;top:313px">权重(wi)</div>
<div class="a ct" style="left:232px;top:343px">景色</div>
<div class="a ct" style="left:332px;top:343px">1(1)</div>
<div class="a ct" style="left:432px;top:343px">0.5545(0.5)</div>
<div class="a ct" style="left:532px;top:343px">3.8888(4)</div>
<div class="a ct" style="left:632px;top:343px">0.9617(0.3333)</div>
<div class="a ct" style="left:732px;top:343px">7.9664(8)</div>
<div class="a ct" style="left:832px;top:343px">0.2738</div>
<div class="a ct" style="left:232px;top:373px">费用</div>
<div class="a ct" style="left:332px;top:373px">1.8036(2)</div>
<div class="a ct" style="left:432px;top:373px">1(1)</div>
<div class="a ct" style="left:532px;top:373px">7.0587(7)</div>
<div class="a ct" style="left:632px;top:373px">5.2112(5)</div>
<div class="a ct" style="left:732px;top:373px">5.0975(5)</div>
<div class="a ct" style="left:832px;top:373px">0.4555</div>
<div class="a ct" style="left:232px;top:403px">居住</div>
<div class="a ct" style="left:332px;top:403px">0.2571(0.25)</div>
<div class="a ct" style="left:432px;top:403px">0.1417(0.1429)</div>
<div class="a ct" style="left:532px;top:403px">1(1)</div>
<div class="a ct" style="left:632px;top:403px">0.5955(0.5)</div>
<div class="a ct" style="left:732px;top:403px">0.4402(0.3333)</div>
<div class="a ct" style="left:832px;top:403px">0.0577</div>
<div class="a ct" style="left:232px;top:433px">饮食</div>
<div class="a ct" style="left:332px;top:433px">1.0399(3)</div>
<div class="a ct" style="left:432px;top:433px">0.1919(0.2)</div>
<div class="a ct" style="left:532px;top:433px">1.6793(2)</div>
<div class="a ct" style="left:632px;top:433px">1(1)</div>
<div class="a ct" style="left:732px;top:433px">1.091(1)</div>
<div class="a ct" style="left:832px;top:433px">0.1258</div>
<div class="a ct" style="left:232px;top:463px">旅途</div>
<div class="a ct" style="left:332px;top:463px">0.1255(0.125)</div>
<div class="a ct" style="left:432px;top:463px">0.1962(0.2)</div>
<div class="a ct" style="left:532px;top:463px">2.2717(3)</div>
<div class="a ct" style="left:632px;top:463px">0.9166(1)</div>
<div class="a ct" style="left:732px;top:463px">1(1)</div>
<div class="a ct" style="left:832px;top:463px">0.0873</div>
<div class="a ct" style="left:332px;top:523px">苏杭</div>
<div class="a ct" style="left:432px;top:523px">北戴河</div>
<div class="a ct" style="left:532px;top:523px">桂林</div>
<div class="a ct" style="left:632px;top:523px">权重(wi)</div>
<div class="a ct" style="left:232px;top:553px">苏杭</div>
<div class="a ct" style="left:332px;top:553px">1(1)</div>
<div class="a ct" style="left:432px;top:553px">2(2)</div>
<div class="a ct" style="left:532px;top:553px">5(5)</div>
<div class="a ct" style="left:632px;top:553px">0.5949</div>
<div class="a ct" style="left:232px;top:583px">北戴河</div>
<div class="a ct" style="left:332px;top:583px">0.5(0.5)</div>
<div class="a ct" style="left:432px;top:583px">1(1)</div>
<div class="a ct" style="left:532px;top:583px">2(2)</div>
<div class="a ct" style="left:632px;top:583px">0.2766</div>
<div class="a ct" style="left:232px;top:613px">桂林</div>
<div class="a ct" style="left:332px;top:613px">0.2(0.2)</div>
<div class="a ct" style="left:432px;top:613px">0.5(0.5)</div>
<div class="a ct" style="left:532px;top:613px">1(1)</div>
<div class="a ct" style="left:632px;top:613px">0.1285</div>
<div class="a ct" style="left:332px;top:673px">苏杭</div>
<div class="a ct" style="left:432px;top:673px">北戴河</div>
<div class="a ct" style="left:532px;top:673px">桂林</div>
<div class="a ct" style="left:632px;top:673px">权重(wi)</div>
<div class="a ct" style="left:232px;top:703px">苏杭</div>
<div class="a ct" style="left:332px;top:703px">1(1)</div>
<div class="a ct" style="left:432px;top:703px">0.3333(0.3333)</div>
<div class="a ct" style="left:532px;top:703px">0.125(0.125)</div>
<div class="a ct" style="left:632px;top:703px">0.082</div>
<div class="a ct mg" style="left:232px;top:283px">权重矩阵：旅游问题: λmax=5.4319;CR=0.0964【原λmax=6.083;CR=0.2417】</div>
<div class="a ct mg" style="left:232px;top:493px">权重矩阵：旅游问题--景色: λmax=3.0055;CR=0.0053【原λmax=3.0055;CR=0.0053】</div>
<div class="a ct mg" style="left:232px;top:643px">权重矩阵：旅游问题--费用: λmax=3.0015;CR=0.0015【原λmax=3.0015;CR=0.0015】</div>
<div class="a" style="left:203px;top:186px;width:764px;height:536px;border:1px solid #d0d0d0;border-right:none;border-bottom:none"></div>
<div class="a" style="left:205px;top:188px;width:762px;height:533px;border:1px solid #6a6a6a;border-top-width:1px"></div>
<div class="a" style="left:206px;top:189px;width:760px;height:1px;background:#fff"></div>
<div class="a" style="left:206px;top:189px;width:1px;height:531px;background:#fff"></div>
<div class="a" style="left:207px;top:190px;width:1px;height:530px;background:#d4d4d4"></div>
<div class="a" style="left:948px;top:190px;width:17px;height:530px;background:#cbcbcb;border-left:1px solid #a6a6a6;border-right:1px solid #a6a6a6"></div>
<div class="a" style="left:949px;top:190px;width:15px;height:17px;background:#fff;border-bottom:1px solid #a6a6a6;border-top:1px solid #c8c8c8"></div>
<svg class="a" style="left:951px;top:195px" width="11" height="7"><path d="M1 6 L5.5 1 L10 6 Z" fill="#6e6e6e"/></svg>
<div class="a" style="left:949px;top:240px;width:15px;height:182px;background:#f0f0f0;border-top:1px solid #a6a6a6;border-bottom:2px solid #a0a0a0"></div>
<div class="a" style="left:949px;top:703px;width:15px;height:17px;background:#fff;border-top:1px solid #a6a6a6"></div>
<svg class="a" style="left:951px;top:709px" width="11" height="7"><path d="M1 1 L5.5 6 L10 1 Z" fill="#6e6e6e"/></svg>
<div class="a" style="left:929px;top:214px;width:19px;height:506px;background:#fff"></div>
<div class="a" style="left:203px;top:722px;width:765px;height:23px;background:#fff;border-bottom:1px solid #d8d8d8"></div>
<div class="a" style="left:208px;top:721px;width:349px;height:23px;background:#7e8184;border-radius:0 0 3px 3px"></div>
<div class="stab" style="left:208px;top:721px;width:60px;border-bottom-left-radius:3px;">得分表</div>
<div class="stab" style="left:270px;top:721px;width:73px;">权重分配图</div>
<div class="stab act" style="left:344px;top:721px;width:68px;">矩阵明细表</div>
<div class="stab" style="left:414px;top:721px;width:72px;">敏感度曲线</div>
<div class="stab" style="left:487px;top:721px;width:70px;border-bottom-right-radius:3px;">敏感度交互</div>
<div class="a" style="left:11px;top:745px;width:308px;height:23px;background:#7e8184;border-radius:0 0 3px 3px"></div>
<div class="stab" style="left:11px;top:745px;width:83px;border-bottom-left-radius:3px;">第一步：模型</div>
<div class="stab" style="left:96px;top:745px;width:75px;">第二步:&thinsp;数据</div>
<div class="stab act" style="left:173px;top:745px;width:83px;">第三步：报表</div>
<div class="stab" style="left:258px;top:745px;width:61px;border-bottom-right-radius:3px;">用户手册</div>
<svg class="a" style="left:300px;top:42px" width="20" height="24"><path d="M3.5 3.5 V20 L7.5 16.2 L10.2 22 L12.8 21 L10.3 15.3 H15.8 Z" fill="#fff" stroke="#000" stroke-width="1" stroke-linejoin="miter"/></svg>
<div class="a" style="left:972px;top:784px;width:2px;height:2px;background:#c4c4c4"></div><div class="a" style="left:968px;top:788px;width:2px;height:2px;background:#c4c4c4"></div><div class="a" style="left:972px;top:788px;width:2px;height:2px;background:#c4c4c4"></div><div class="a" style="left:963px;top:792px;width:2px;height:2px;background:#c4c4c4"></div><div class="a" style="left:968px;top:792px;width:2px;height:2px;background:#c4c4c4"></div><div class="a" style="left:972px;top:792px;width:2px;height:2px;background:#c4c4c4"></div>
<!-- status -->
<div class="a" style="left:870px;top:776px;color:#444;line-height:14px">授权方式：文件</div>
<div class="a" style="left:0;top:58px;width:1px;height:739px;background:#234a84"></div>
<div class="a" style="left:1px;top:58px;width:1px;height:738px;background:#f4f6fa"></div>
<div class="a" style="left:3px;top:156px;width:1px;height:615px;background:#dadada"></div>
<div class="a" style="left:976px;top:58px;width:1px;height:739px;background:#234a84"></div>
<div class="a" style="left:975px;top:58px;width:1px;height:738px;background:#eef2f8"></div>
<div class="a" style="left:0;top:796px;width:977px;height:1px;background:#234a84"></div>
<div class="a" style="left:0;top:0;width:977px;height:1px;background:#234a84"></div>
<div class="a" style="left:0;top:0;width:1px;height:58px;background:#234a84"></div>
<div class="a" style="left:976px;top:0;width:1px;height:58px;background:#234a84"></div>
</body></html>
